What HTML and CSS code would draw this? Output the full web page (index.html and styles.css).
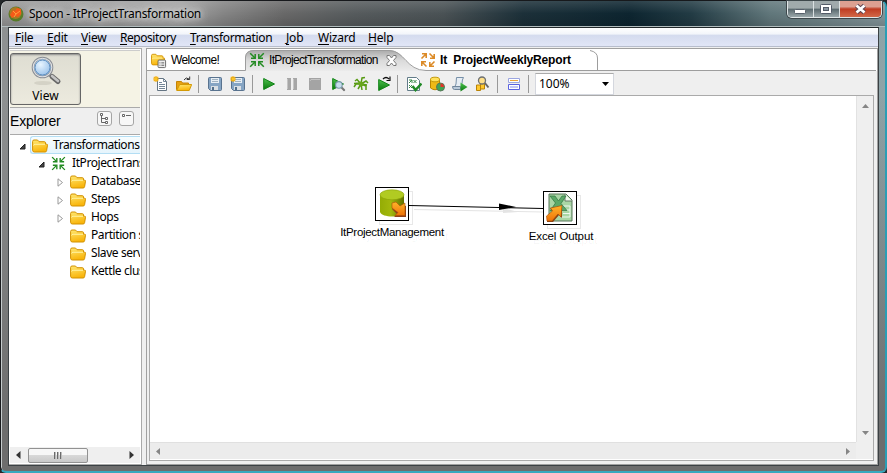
FILE: index.html
```html
<!DOCTYPE html>
<html lang="en">
<head>
<meta charset="utf-8">
<title>Spoon - ItProjectTransformation</title>
<link rel="stylesheet" href="styles.css">
</head>
<body>
<svg class="defs" width="0" height="0">
  <defs>
    <linearGradient id="gold" x1="0" y1="0" x2="0.3" y2="1"><stop offset="0" stop-color="#ffe873"/><stop offset="1" stop-color="#f9b50b"/></linearGradient>
    <linearGradient id="play" x1="0" y1="0" x2="0" y2="1"><stop offset="0" stop-color="#4fc04f"/><stop offset="1" stop-color="#087a0c"/></linearGradient>
    <linearGradient id="orange" x1="0" y1="0" x2="0" y2="1"><stop offset="0" stop-color="#ffb52a"/><stop offset="1" stop-color="#ee7208"/></linearGradient>
    <linearGradient id="tabfill" x1="0" y1="0" x2="0" y2="1"><stop offset="0" stop-color="#a9a9a9"/><stop offset=".5" stop-color="#dadada"/><stop offset="1" stop-color="#ebebeb"/></linearGradient>
    <linearGradient id="cyl" x1="0" y1="0" x2="1" y2="0"><stop offset="0" stop-color="#94ac05"/><stop offset=".45" stop-color="#a3b80c"/><stop offset="1" stop-color="#5f7100"/></linearGradient>
    <radialGradient id="lens" cx=".4" cy=".35" r=".7"><stop offset="0" stop-color="#e8f5ff"/><stop offset="1" stop-color="#8cb9e6"/></radialGradient>
    <symbol id="folder" viewBox="0 0 16 14">
      <path d="M.6 2.500Q.6 1 2 1h3.500l1.500 1.700h5.400q1.100 0 1.100 1.100v1.400h1.200q.9 0 .8 1l-.9 5.500q-.2 1.300-1.600 1.300H2.400Q.6 13 .6 11.200z" fill="url(#gold)" stroke="#d29100"/>
      <path d="M1.500 6.500q.2-1.200 1.600-1.200h10" fill="none" stroke="#fff3a0"/>
    </symbol>
    <symbol id="inward" viewBox="0 0 16 16">
      <g fill="none" stroke="#238b22" stroke-width="1.500">
        <path d="M1.200 1.200l4.800 4.800M14.800 1.200L10 6M1.200 14.800L6 10M14.800 14.800L10 10"/>
        <path d="M2 6.200h4.200V2M14 6.200H9.800V2M2 9.800h4.200V14M14 9.800H9.800V14"/>
      </g>
    </symbol>
    <symbol id="cycle" viewBox="0 0 16 16">
      <g fill="none" stroke="#dc8b28" stroke-width="1.600">
        <path d="M1.500 6.500L5.500 2.500M2 1.800h4.200V6M9.500 1.500l4 4M14.200 2v4.200H10M14.500 9.500l-4 4M14 14.200H9.800V10M6.500 14.500l-4-4M1.800 14V9.800H6"/>
      </g>
    </symbol>
    <symbol id="star" viewBox="0 0 6 6"><path d="M3 0v6M0 3h6M.8.800l4.400 4.400M5.200.800L.8 5.200" stroke="#f1ae12" stroke-width="1.200"/><circle cx="3" cy="3" r="1.300" fill="#ffc51d"/></symbol>
    <symbol id="disk" viewBox="0 0 16 16">
      <path d="M1.500 2.500q0-1 1-1h11q1 0 1 1v11q0 1-1 1h-10l-2-2z" fill="#86a5c4" stroke="#59738f"/>
      <path d="M4 2h8v5H4z" fill="#e7eef4"/><path d="M5 3.500h6M5 5.500h6" stroke="#a0b2c1"/>
      <path d="M4 10h7v4H4z" fill="#d9dfe4"/><path d="M5 11h2v3H5z" fill="#526f8b"/>
    </symbol>
    <symbol id="playicon" viewBox="0 0 16 16"><path d="M2.700 2.500L13.500 8 2.700 13.500z" fill="url(#play)" stroke="#128418"/></symbol>
    <symbol id="mag" viewBox="0 0 10 10"><path d="M6 6l3.300 3.300" stroke="#777" stroke-width="1.900"/><circle cx="4" cy="4" r="3" fill="#c6dded" stroke="#7898a8"/></symbol>
  </defs>
</svg>

<div class="window">
  <header class="titlebar">
    <svg class="appicon" viewBox="0 0 16 16"><circle cx="8" cy="8" r="7.500" fill="#577b28"/><circle cx="7.500" cy="7" r="6" fill="#a87a24"/><path d="M2 9l3-5 2 1 2-3 4 1v5l-3 3-3-1-3 2z" fill="#f45a18"/><path d="M5 5l3 3 4-3M8 8l-2 3" stroke="#ffa03b" fill="none"/></svg>
    <span class="caption">Spoon - ItProjectTransformation</span>
    <div class="winbuttons">
      <span class="wb"><svg viewBox="0 0 24 16"><rect x="6.500" y="8.500" width="11" height="4" rx="1" fill="#fff" stroke="#57606b"/></svg></span>
      <span class="wb"><svg viewBox="0 0 24 16"><rect x="6.500" y="3.500" width="11" height="9" rx="1" fill="#fff" stroke="#535b68"/><rect x="9.500" y="6.500" width="5" height="3" fill="#8b97a2" stroke="#535b68"/></svg></span>
      <span class="wb close"><svg viewBox="0 0 40 16"><path d="M16.500 4.500l8 7M24.500 4.500l-8 7" stroke="#5b4350" stroke-width="4.600"/><path d="M16.500 4.500l8 7M24.500 4.500l-8 7" stroke="#fff" stroke-width="2.700"/></svg></span>
    </div>
  </header>

  <main class="client">
    <nav class="menubar">
      <span><u>F</u>ile</span><span><u>E</u>dit</span><span><u>V</u>iew</span><span class="m-rep"><u>R</u>epository</span><span class="m-tra"><u>T</u>ransformation</span><span><u>J</u>ob</span><span><u>W</u>izard</span><span><u>H</u>elp</span>
    </nav>
    <div class="panes">
      <aside class="side">
        <div class="perspective">
          <div class="viewbtn">
            <svg viewBox="0 0 34 32">
              <ellipse cx="13" cy="28" rx="9" ry="2" fill="#d4d2c6"/>
              <path d="M19 19l3.500 3.500" stroke="#888" stroke-width="3"/><path d="M22 21.500l6 5" stroke="#666" stroke-width="5" stroke-linecap="round"/><path d="M22 21l6 5" stroke="#c4c4c4" stroke-width="2.600" stroke-linecap="round"/>
              <circle cx="12.500" cy="12.500" r="9.500" fill="url(#lens)" stroke="#8a8e94" stroke-width="2.600"/><circle cx="12.500" cy="12.500" r="9.300" fill="none" stroke="#dfe2e6" stroke-width="1.100"/><circle cx="12.500" cy="12.500" r="7.500" fill="none" stroke="#5e8fc0"/>
            </svg>
            <span>View</span>
          </div>
        </div>
        <div class="exphead">
          <span class="exptitle">Explorer</span>
          <svg class="expbtns" viewBox="0 0 38 16"><g fill="#f7f7f7" stroke="#a5a5a5"><rect x=".5" y=".5" width="14" height="14" rx="2.500"/><rect x="22.500" y=".5" width="14" height="14" rx="2.500"/></g><path d="M4.500 4v7.500H8M4.500 7.500H8" fill="none" stroke="#666"/><g fill="#fff" stroke="#666"><path d="M3.500 2.500h2v2h-2zM8.500 6.500h2v2h-2zM8.500 10.500h2v2h-2zM25.500 3.500h2v2h-2z"/></g><path d="M29 4.500h5" stroke="#666"/></svg>
        </div>
        <div class="tree">
          <div class="row selected"><svg class="tw open" viewBox="0 0 7 7"><path d="M6 1v5H1z"/></svg><div class="hot"><svg class="ic"><use href="#folder"/></svg><span>Transformations</span></div></div>
          <div class="row l2"><svg class="tw open" viewBox="0 0 7 7"><path d="M6 1v5H1z"/></svg><svg class="ic in"><use href="#inward"/></svg><span>ItProjectTransformation</span></div>
          <div class="row l3"><svg class="tw" viewBox="0 0 7 9"><path d="M1 .8l4.500 3.700L1 8.200z"/></svg><svg class="ic"><use href="#folder"/></svg><span>Database connections</span></div>
          <div class="row l3"><svg class="tw" viewBox="0 0 7 9"><path d="M1 .8l4.500 3.700L1 8.200z"/></svg><svg class="ic"><use href="#folder"/></svg><span>Steps</span></div>
          <div class="row l3"><svg class="tw" viewBox="0 0 7 9"><path d="M1 .8l4.500 3.700L1 8.200z"/></svg><svg class="ic"><use href="#folder"/></svg><span>Hops</span></div>
          <div class="row l3"><i class="tw"></i><svg class="ic"><use href="#folder"/></svg><span>Partition schemas</span></div>
          <div class="row l3"><i class="tw"></i><svg class="ic"><use href="#folder"/></svg><span>Slave server</span></div>
          <div class="row l3"><i class="tw"></i><svg class="ic"><use href="#folder"/></svg><span>Kettle cluster schemas</span></div>
        </div>
        <div class="hscroll"><svg viewBox="0 0 5 8"><path d="M4.500 0v8L0 4z"/></svg><div class="thumb"><i></i><i></i><i></i></div><svg class="end" viewBox="0 0 5 8"><path d="M.5 0v8L5 4z"/></svg></div>
      </aside>

      <section class="work">
        <div class="tabs">
          <svg class="tabshape" viewBox="0 0 731 23">
            <path d="M98 22V8Q99 1 107 1H242C258 1 259 22 279 22z" fill="url(#tabfill)"/>
            <path d="M0 21.500H98.500V8Q99 1.500 107 1.500H242C258 1.500 259 21.500 279 21.500H729" fill="none" stroke="#9d9d9d"/>
            <path d="M443 1.500Q450.500 3 450.500 9V21" fill="none" stroke="#9d9d9d"/>
          </svg>
          <div class="tab t1"><svg viewBox="0 0 17 17"><use href="#folder" width="15" height="14"/><rect x="7.500" y="7.500" width="8" height="8" rx="1" fill="#eee" stroke="#666"/><path d="M9 10.500h1M11 10.500h3M9 13h1M11 13h3" stroke="#555"/></svg><span>Welcome!</span></div>
          <div class="tab t2"><svg viewBox="0 0 16 16"><use href="#inward"/></svg><span>ItProjectTransformation</span><svg class="x" viewBox="0 0 11 11"><path d="M1 .5h2.500l2 2.500 2-2.500H10v2L7.500 5.500 10 8.500v2H7.500l-2-2.500-2 2.500H1v-2l2.500-3L1 2.500z" fill="#fff" stroke="#777"/></svg></div>
          <div class="tab t3"><svg viewBox="0 0 16 16"><use href="#cycle"/></svg><span>It&nbsp; ProjectWeeklyReport</span></div>
        </div>
        <div class="toolbar">
          <span class="tool"><svg viewBox="0 0 16 16"><path d="M4.500 2.500h6l3 3v9h-9z" fill="#fff" stroke="#657583"/><path d="M10.500 2.500v3h3M6 6.500h3M6 8.500h6M6 10.500h6M6 12.500h6" fill="none" stroke="#758797"/><use href="#star" width="6" height="6"/></svg></span>
          <span class="tool"><svg viewBox="0 0 16 16"><path d="M.5 13.500v-8h5l1 1.500h6v7z" fill="#e7a114" stroke="#c58506"/><path d="M.7 14.500l3-6h12l-2.500 6z" fill="url(#gold)" stroke="#d39a06"/><path d="M8 4q2-3.500 5-1M13.700.500v3h-3" fill="none" stroke="#333"/></svg></span>
          <i class="sep"></i>
          <span class="tool"><svg viewBox="0 0 16 16"><use href="#disk"/></svg></span>
          <span class="tool"><svg viewBox="0 0 16 16"><use href="#disk"/><use href="#star" width="6" height="6"/></svg></span>
          <i class="sep"></i>
          <span class="tool"><svg viewBox="0 0 16 16"><use href="#playicon"/></svg></span>
          <span class="tool"><svg viewBox="0 0 16 16"><path d="M3 2h4v12H3zM9 2h4v12H9z" fill="#a6a6a6"/><path d="M3.500 3v10M9.500 3v10" stroke="#c4c4c4"/></svg></span>
          <span class="tool"><svg viewBox="0 0 16 16"><path d="M2 2h12v12H2z" fill="#a4a4a4"/><path d="M3 5l1-1.500h9" stroke="#c4c4c4" fill="none"/></svg></span>
          <span class="tool"><svg viewBox="0 0 16 16"><use href="#playicon"/><use href="#mag" x="4.500" y="4.500" width="11" height="11"/></svg></span>
          <span class="tool"><svg viewBox="0 0 16 16"><g fill="none" stroke="#579b12" stroke-width="1.500"><path d="M8 8L4 3.500 2 5M8 8l1-6 3-.5M8 8H3l-2 3M8 8l5-3 2 2M8 8l-3 5M8 8l1 6M8 8l5 2v4M7 7L1 7.500M8 8l6 1"/></g><circle cx="8" cy="8" r="2.500" fill="#67a61b"/></svg></span>
          <span class="tool"><svg viewBox="0 0 16 16"><use href="#playicon" y="1"/><path d="M7 3q3-3 6 0M14 .500v4h-3.500" fill="none" stroke="#111" stroke-width="1.200"/></svg></span>
          <i class="sep s2"></i>
          <span class="tool"><svg viewBox="0 0 16 16"><path d="M1.500 1.500h9l3 3v10h-12z" fill="#fff" stroke="#627c89"/><path d="M3 4h3v3M3 7l3-3M7.500 4l3 3M10.500 4l-3 3M3 9l3 3M6 9l-3 3" fill="none" stroke="#378947"/><path d="M6.500 10l3 4 6-6.500" fill="none" stroke="#218a27" stroke-width="2.500"/></svg></span>
          <span class="tool"><svg viewBox="0 0 16 16"><path d="M1.500 3v9q4.500 3.500 9 0V3z" fill="#efb916" stroke="#b98500"/><ellipse cx="6" cy="3.500" rx="4.500" ry="2.300" fill="#ffe15a" stroke="#c59b0e"/><circle cx="11.500" cy="11" r="4" fill="#42a553" stroke="#59765b"/><path d="M11.500 11V7.500A3.500 3.500 0 0 1 15 11z" fill="#e33329"/></svg></span>
          <span class="tool"><svg viewBox="0 0 16 16"><path d="M4.500 1.500h7q-1.500 2-1.500 6v4H2.500q2-2 2-10z" fill="#e6edf4" stroke="#7790a8"/><path d="M.500 10.500h8v3h-6q-2 0-2-3z" fill="#b9c9d9" stroke="#70869c"/><path d="M8.500 6.500l7 4.500-7 4.500z" fill="url(#play)"/></svg></span>
          <span class="tool"><svg viewBox="0 0 16 16"><path d="M1.500 9v5.500h4V9zM5.500 7.500V13h4V7.500z" fill="#ffc82c" stroke="#b98306"/><path d="M9.500 6.500l4 5" stroke="#666" stroke-width="2"/><circle cx="7" cy="4.500" r="3.500" fill="#ffe08a" stroke="#6d7072" stroke-width="1.300"/></svg></span>
          <i class="sep"></i>
          <span class="tool"><svg viewBox="0 0 16 16"><path d="M2.500 2.500h11v4h-11z" fill="#fff" stroke="#9ba5e0"/><path d="M4 4.500h8" stroke="#eca437"/><path d="M2.500 8.500h11v5h-11z" fill="#fff" stroke="#5b62e0"/><path d="M4 11h8" stroke="#8a90ee"/></svg></span>
          <i class="sep s3"></i>
          <div class="combo"><span>100%</span><svg viewBox="0 0 7 4"><path d="M0 0h7L3.500 4z"/></svg></div>
        </div>
        <div class="canvaswrap">
          <div class="canvas">
            <svg class="hop" viewBox="0 0 707 347"><path d="M264 113.500L393 116" stroke="#e4e4e4" fill="none"/><path d="M353 112l15 4-15 1z" fill="#e4e4e4"/><path d="M259 109.500L393 112.500" stroke="#000" fill="none"/><path d="M349 107.500l17 3.500-17 3z" fill="#000"/></svg>
            <div class="node n1"><div class="box"><svg viewBox="0 0 32 32"><path d="M4 7v17c2 6 22 6 24 0V7z" fill="url(#cyl)"/><ellipse cx="16" cy="6.800" rx="12" ry="5" fill="#b1cb22" stroke="#8ba20a" stroke-width=".6"/><path d="M17 17l3-1 4 4 2-3 4 1v11H18l3-3-5-5z" fill="#8f4018"/><path d="M16 15l4-1 4 4 5-3v12.500H19l3-3-6-4.500z" fill="url(#orange)" stroke="#ac5108" stroke-width=".6"/></svg></div><span>ItProjectManagement</span></div>
            <div class="node n2"><div class="box"><svg viewBox="0 0 32 32"><path d="M5 2h17l6 6v21H5z" fill="#a9d6a5" stroke="#567459"/><path d="M21 2v7h7" fill="#eef8ec" stroke="#667b67"/><path d="M19 14h7v11h-9M19 18h7M19 21.500h7" fill="none" stroke="#eff8ef"/><path d="M6 4h5l3.500 5L18 4h4l-5 7.500 6 7h-5.500L14 14l-3 5H6l5.500-8z" fill="#5ba968" stroke="#2f7440" stroke-width=".7"/><path d="M3 25l6-5-3-4 12-2v12l-3-3-6 7H3z" fill="#874013"/><path d="M2.500 24l6-5-2-3 11.500-2.500-1 11.500-3-3-6 7H3z" fill="url(#orange)" stroke="#a44b08" stroke-width=".6"/></svg></div><span>Excel Output</span></div>
          </div>
          <div class="vbar"><svg viewBox="0 0 7 4"><path d="M0 4h7L3.500 0z"/></svg><svg viewBox="0 0 7 4"><path d="M0 0h7L3.500 4z"/></svg></div>
          <div class="hbar"><svg viewBox="0 0 4 7"><path d="M4 0v7L0 3.500z"/></svg><svg viewBox="0 0 4 7"><path d="M0 0v7l4-3.500z"/></svg></div>
          <div class="corner"></div>
        </div>
      </section>
    </div>
  </main>
</div>
</body>
</html>
```
FILE: styles.css
```css
* { box-sizing: border-box; }
body { margin: 0; width: 887px; height: 473px; overflow: hidden; background: #24282a; font: 12px/18px "Noto Sans", "Open Sans", sans-serif; color: #000; }
svg { display: block; flex: none; }
.defs { position: absolute; }
.window { width: 887px; height: 473px; display: flex; flex-direction: column; border: 1px solid #17191c; border-right: 2px solid #2b9eb5; border-bottom: 2px solid #35a9bf; border-radius: 7px 7px 6px 6px; background: linear-gradient(#0000 20%, #6d6d6d 90%), linear-gradient(90deg, #8e9192 0, #777 80%, #8fa4a8 100%); padding: 0 6px 5px 7px; box-shadow: inset 1px 1px #c6cccd; }
.titlebar { height: 26px; margin: 0 -6px; padding-left: 6px; display: flex; flex: none; align-items: center; background: linear-gradient(#fff2, #0000 50%, #0002), linear-gradient(90deg, #969696 0, #a2a2a2 20%, #858585 25%, #686868 32%, #565b5d 40%, #4a5255 50%, #1c3039 59%, #0d2530 71%, #223b44 78%, #61777b 87%, #83959a 100%); border-bottom: 1px solid #b2bdbe; border-radius: 6px 6px 0 0; }
.appicon { width: 16px; height: 16px; margin: 0 5px 0 0; }
.caption { width: 174px; white-space: nowrap; letter-spacing: -.28px; text-shadow: 0 0 5px #ddd, 0 0 8px #ddd, 0 0 12px #ddd; }
.winbuttons { display: flex; align-self: flex-start; margin: 0 3px 0 auto; height: 17px; border: 1px solid #e0e6e7; border-top: 0; border-radius: 0 0 5px 5px; overflow: hidden; box-shadow: 0 0 0 1px #3d474b; }
.wb { width: 26px; border-right: 1px solid #dbe1e2; background: linear-gradient(#a0aaac 45%, #59686d 50%, #9aa7aa); }
.wb svg { width: 24px; height: 16px; }
.wb.close { width: 41px; border: 0; background: linear-gradient(#dca091 35%, #bf3c22 50%, #d26848); }
.wb.close svg { width: 40px; }
.client { height: 439px; flex: none; display: flex; flex-direction: column; border: 1px solid #3b4144; border-top-color: #22282a; background: #efefef; }
.menubar { height: 19px; flex: none; display: grid; grid-template-columns: 32px 34px 39px 70px 96px 32px 50px 1fr; padding-left: 6px; background: linear-gradient(#fff 0, #f2f5fa 35%, #d4dbee 38%, #e0e5f6 95%); border-bottom: 1px solid #b7bdcc; line-height: 19px; letter-spacing: -.2px; white-space: nowrap; }
.menubar u { text-underline-offset: 2px; text-decoration-thickness: 1px; }
.m-rep { letter-spacing: -.45px; }
.m-tra { letter-spacing: -.35px; }
.panes { flex: 1; min-height: 0; display: flex; padding-top: 1px; }
.side { width: 133px; flex: none; margin-right: 4px; border: 1px solid #a9a9a9; border-left: 0; padding: 1px 1px 0 1px; display: flex; flex-direction: column; background: #fff; overflow: hidden; }
.perspective { height: 57px; flex: none; padding: 2px 0 0; background: #f5f3e5; border-top: 1px solid #ccc; }
.viewbtn { width: 71px; height: 52px; border: 1px solid #666; border-radius: 3px; background: linear-gradient(#deddd2, #eceade); box-shadow: inset 0 1px 2px #888; display: flex; flex-direction: column; align-items: center; }
.viewbtn svg { width: 34px; height: 32px; margin: 1px 0 0 2px; }
.exphead { height: 28px; flex: none; border-top: 1px solid #aaa; border-bottom: 1px solid #aaa; background: #efefef; display: flex; align-items: center; justify-content: space-between; }
.exptitle { font: 14px/18px "Liberation Sans", Arial, sans-serif; letter-spacing: -.2px; }
.expbtns { width: 38px; height: 16px; margin: -5px 5px 0 0; }
.tree { flex: 1; min-height: 0; overflow: hidden; white-space: nowrap; padding-top: 1px; background: #fff; letter-spacing: -.42px; }
.row { height: 18px; display: flex; align-items: center; }
.tw { width: 7px; height: 9px; flex: none; margin: 3px 8px 0 10px; fill: #fff; stroke: #999; }
.tw.open { height: 7px; margin-right: 6px; margin-left: 9px; fill: #444; stroke: #222; }
.row.l2 .tw { margin-left: 28px; }
.row.l3 .tw { margin-left: 47px; margin-right: 6px; }
.ic { width: 16px; height: 14px; margin-right: 5px; margin-top: 1px; }
.ic.in { width: 15px; height: 15px; }
.row.l2 .ic { margin-right: 6px; }
.hot { height: 18px; flex: 1; display: flex; align-items: center; border: 1px solid #b3def4; border-right: 0; border-radius: 3px 0 0 3px; background: linear-gradient(#f7fcfe, #e5f4fc); margin-left: -2px; padding-left: 1px; }
.hscroll { height: 16px; flex: none; display: flex; align-items: center; background: #efefef; padding: 0 6px; margin-bottom: 1px; }
.hscroll svg { width: 5px; height: 8px; fill: #333; }
.hscroll .end { margin-left: auto; }
.thumb { width: 60px; height: 15px; margin-left: 7px; border: 1px solid #929292; border-radius: 2px; background: linear-gradient(#f7f7f7 45%, #d8d8d8 50%, #c9c9c9); display: flex; gap: 1px; justify-content: center; align-items: center; }
.thumb i { width: 2px; height: 7px; background: #6b6b6b; border-right: 1px solid #bbb; }
.work { flex: 1; min-width: 0; display: flex; flex-direction: column; border: 1px solid #a0a0a0; padding: 0 0 3px; background: #efefef; }
.tabs { height: 22px; flex: none; position: relative; background: #fff; display: grid; grid-template-columns: 100px 172px 1fr; font: 12px/20px "Liberation Sans", Arial, sans-serif; }
.tabshape { position: absolute; left: 0; top: 0; width: 731px; height: 23px; }
.tab { position: relative; display: flex; align-items: center; white-space: nowrap; }
.tab > svg { width: 16px; height: 16px; margin-right: 4px; }
.t1 { padding-left: 4px; letter-spacing: -.6px; }
.t1 > svg { margin-top: 2px; }
.t2 { padding-left: 2px; letter-spacing: -.68px; }
.tab > svg.x { width: 11px; height: 11px; margin-left: 8px; }
.t3 { padding-left: 1px; font-weight: bold; letter-spacing: -.16px; }
.toolbar { height: 24px; flex: none; display: flex; align-items: center; padding: 1px 0 0 2px; }
.tool { width: 23px; display: flex; justify-content: center; }
.tool svg { width: 16px; height: 16px; }
.sep { width: 1px; height: 18px; background: #999; margin: 0 4px 0 3px; }
.s2 { margin-left: 2px; }
.s3 { margin-right: 6px; }
.combo { width: 79px; height: 22px; border: 1px solid #d4d7de; border-top-color: #aaa; background: #fff; display: flex; align-items: center; justify-content: space-between; padding: 0 4px 0 3px; align-self: flex-end; }
.combo svg { width: 7px; height: 4px; }
.canvaswrap { flex: 1; min-height: 0; margin: 0 3px 0 2px; border: 1px solid #aaa; display: grid; grid-template: 1fr 17px / 1fr 17px; background: #fff; padding: 0 0 1px; }
.canvas { position: relative; background: #fff; }
.hop { position: absolute; z-index: 1; left: 0; top: 0; width: 707px; height: 347px; overflow: visible; }
.node { position: absolute; width: 140px; display: flex; flex-direction: column; align-items: center; font: 11.5px/14px "Liberation Sans", Arial, sans-serif; letter-spacing: -.3px; text-shadow: 4px 4px #0000000b; }
.n1 { left: 172px; top: 91px; }
.n2 { left: 341px; top: 95px; letter-spacing: -.1px; }
.box { width: 34px; height: 34px; border: 1px solid #000; background: #fff; box-shadow: 4px 4px 0 -1px #fff, 4px 4px #e8e8e8; margin-bottom: 4px; margin-left: -1px; }
.n2 .box { margin-left: -3px; }
.box svg { width: 32px; height: 32px; }
.vbar { background: #efefef; border-left: 1px solid #e2e2e2; display: flex; flex-direction: column; align-items: center; justify-content: space-between; padding: 8px 0 7px; }
.vbar svg { width: 7px; height: 4px; fill: #858585; }
.hbar { background: #ececec; border-top: 1px solid #e0e0e0; display: flex; align-items: center; justify-content: space-between; padding: 0 6px; }
.hbar svg { width: 4px; height: 7px; fill: #858585; }
.corner { background: #efefef; }
```
